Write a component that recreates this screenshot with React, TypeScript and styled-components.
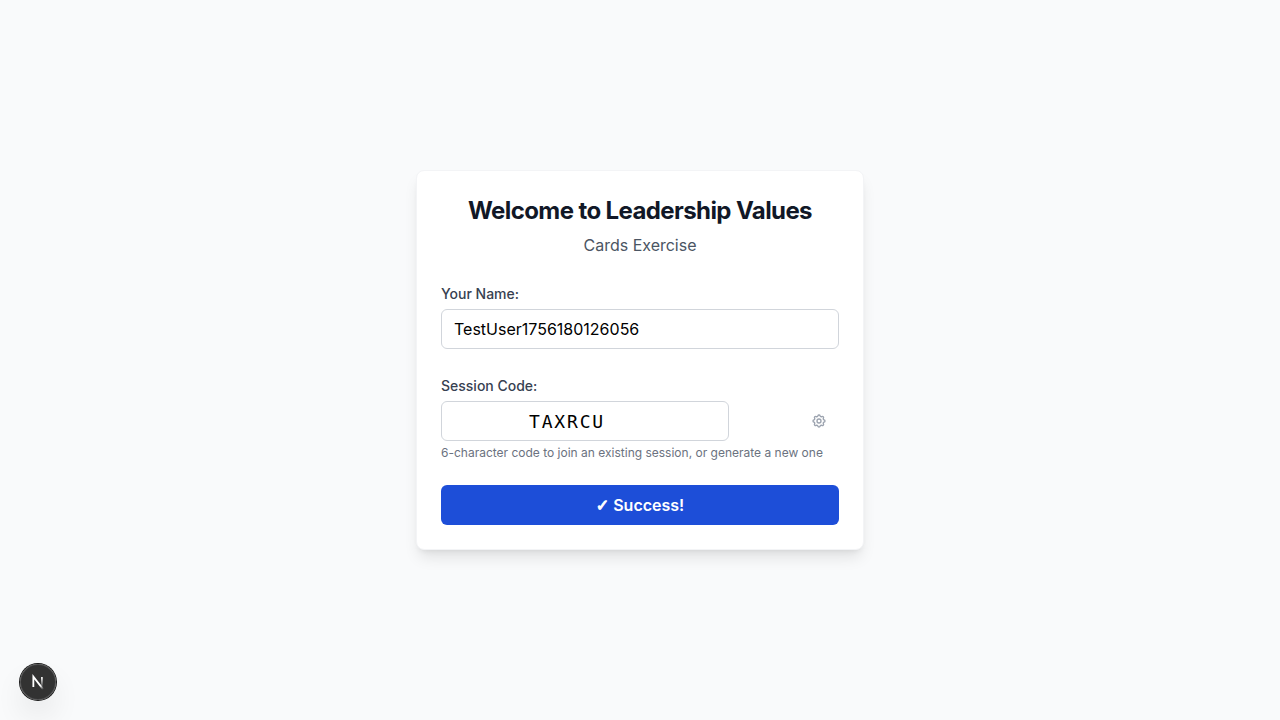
import React, { useState } from "react";
import styled, { createGlobalStyle } from "styled-components";

const GlobalStyle = createGlobalStyle`
  *, *::before, *::after { box-sizing: border-box; }
  body {
    margin: 0;
    background: #f9fafb;
    color: #111827;
    font-family: Inter, "Liberation Sans", sans-serif;
    font-size: 16px;
    line-height: 24px;
    -webkit-font-smoothing: antialiased;
  }
`;

const Page = styled.main`
  min-height: 100vh;
  display: flex;
  align-items: center;
  justify-content: center;
  padding: 16px;
`;

const Card = styled.section`
  width: 100%;
  max-width: 448px;
  padding: 24px;
  background: #ffffff;
  border: 1px solid #f3f4f6;
  border-radius: 8px;
  box-shadow: 0 10px 15px -3px rgba(0, 0, 0, 0.1), 0 4px 6px -4px rgba(0, 0, 0, 0.1);
`;

const Header = styled.header`
  display: flex;
  flex-direction: column;
  gap: 6px;
  margin-bottom: 24px;
  text-align: center;
`;

const Title = styled.h1`
  margin: 0;
  font-size: 24px;
  line-height: 32px;
  font-weight: 700;
  letter-spacing: -0.025em;
`;

const Subtitle = styled.p`
  margin: 0;
  color: #4b5563;
`;

const Form = styled.form`
  display: flex;
  flex-direction: column;
  gap: 24px;
`;

const Field = styled.div`
  display: flex;
  flex-direction: column;
  gap: 4px;
`;

const LabelLine = styled.div`
  height: 24px;
`;

const Label = styled.label`
  font-size: 14px;
  line-height: 20px;
  font-weight: 500;
  color: #374151;
`;

const Input = styled.input<{ $code?: boolean }>`
  width: 100%;
  min-width: 0;
  height: 40px;
  padding: ${(p) => (p.$code ? "8px 48px 8px 12px" : "8px 12px")};
  border: 1px solid #d1d5db;
  border-radius: 6px;
  background: #ffffff;
  color: #000000;
  font-family: ${(p) => (p.$code ? '"DejaVu Sans Mono", monospace' : "inherit")};
  font-size: ${(p) => (p.$code ? "18px" : "16px")};
  letter-spacing: ${(p) => (p.$code ? "0.1em" : "normal")};
  text-align: ${(p) => (p.$code ? "center" : "left")};
`;

const CodeRow = styled.div`
  display: grid;
  grid-template-columns: 1fr 40px;
  gap: 70px;
`;

const IconButton = styled.button`
  display: flex;
  align-items: center;
  justify-content: center;
  height: 40px;
  padding: 0;
  border: 0;
  background: transparent;
  color: #9ca3af;
  cursor: pointer;
`;

const Hint = styled.p`
  margin: 0;
  font-size: 12px;
  line-height: 16px;
  color: #6b7280;
`;

const SubmitButton = styled.button`
  height: 40px;
  padding: 8px 16px;
  border: 0;
  border-radius: 6px;
  background: #1d4ed8;
  color: #ffffff;
  font: inherit;
  font-weight: 600;
  cursor: pointer;
`;

const CheckMark = styled.span`
  font-family: "DejaVu Sans", sans-serif;
  font-weight: 700;
  -webkit-text-stroke: 1px currentColor;
`;

const DevButton = styled.button`
  position: fixed;
  left: 20px;
  bottom: 20px;
  width: 36px;
  height: 36px;
  padding: 0;
  display: flex;
  align-items: center;
  justify-content: center;
  border: 0;
  border-radius: 50%;
  background: rgba(0, 0, 0, 0.8);
  box-shadow: 0 0 0 1px #171717, inset 0 0 0 1px rgba(255, 255, 255, 0.14),
    0 16px 32px -8px rgba(0, 0, 0, 0.24);
`;

function CogIcon() {
  return (
    <svg width="16" height="16" viewBox="0 0 24 24" fill="none" stroke="currentColor" strokeWidth="2" strokeLinecap="round" strokeLinejoin="round" aria-hidden="true">
      <path d="M10.325 4.317c.426-1.756 2.924-1.756 3.35 0a1.724 1.724 0 002.573 1.066c1.543-.94 3.31.826 2.37 2.37a1.724 1.724 0 001.065 2.572c1.756.426 1.756 2.924 0 3.35a1.724 1.724 0 00-1.066 2.573c.94 1.543-.826 3.31-2.37 2.37a1.724 1.724 0 00-2.572 1.065c-.426 1.756-2.924 1.756-3.35 0a1.724 1.724 0 00-2.573-1.066c-1.543.94-3.31-.826-2.37-2.37a1.724 1.724 0 00-1.065-2.572c-1.756-.426-1.756-2.924 0-3.35a1.724 1.724 0 001.066-2.573c-.94-1.543.826-3.31 2.37-2.37.996.608 2.296.07 2.572-1.065z" />
      <path d="M15 12a3 3 0 11-6 0 3 3 0 016 0z" />
    </svg>
  );
}

function DevLogo() {
  return (
    <svg width="40" height="40" viewBox="0 0 40 40" fill="none" aria-hidden="true">
      <defs>
        <linearGradient id="diagonal" x1="9.955" y1="11.13" x2="15.156" y2="18.04" gradientUnits="userSpaceOnUse">
          <stop stopColor="white" />
          <stop offset="0.604" stopColor="white" stopOpacity="0" />
          <stop offset="1" stopColor="white" stopOpacity="0" />
        </linearGradient>
        <linearGradient id="stem" x1="11.822" y1="1.4" x2="11.79" y2="13.1" gradientUnits="userSpaceOnUse">
          <stop stopColor="white" />
          <stop offset="1" stopColor="white" stopOpacity="0" />
        </linearGradient>
      </defs>
      <g transform="translate(12.5 13)" strokeWidth="2">
        <path d="M13.3 15.2L2.34 1V12.6" stroke="url(#diagonal)" />
        <path d="M11.825 1.5V13.1" stroke="url(#stem)" />
      </g>
    </svg>
  );
}

export default function App() {
  const [name, setName] = useState("TestUser1756180126056");
  const [code, setCode] = useState("TAXRCU");

  return (
    <>
      <GlobalStyle />
      <Page>
        <Card>
          <Header>
            <Title>Welcome to Leadership Values</Title>
            <Subtitle>Cards Exercise</Subtitle>
          </Header>
          <Form onSubmit={(e) => e.preventDefault()}>
            <Field>
              <LabelLine>
                <Label htmlFor="name">Your Name:</Label>
              </LabelLine>
              <Input id="name" type="text" value={name} onChange={(e) => setName(e.target.value)} />
            </Field>
            <Field>
              <LabelLine>
                <Label htmlFor="code">Session Code:</Label>
              </LabelLine>
              <CodeRow>
                <Input id="code" type="text" $code maxLength={6} value={code} onChange={(e) => setCode(e.target.value.toUpperCase())} />
                <IconButton type="button" aria-label="Session settings">
                  <CogIcon />
                </IconButton>
              </CodeRow>
              <Hint>6-character code to join an existing session, or generate a new one</Hint>
            </Field>
            <SubmitButton type="submit"><CheckMark>✓</CheckMark> Success!</SubmitButton>
          </Form>
        </Card>
      </Page>
      <DevButton type="button" aria-label="Open developer tools">
        <DevLogo />
      </DevButton>
    </>
  );
}
